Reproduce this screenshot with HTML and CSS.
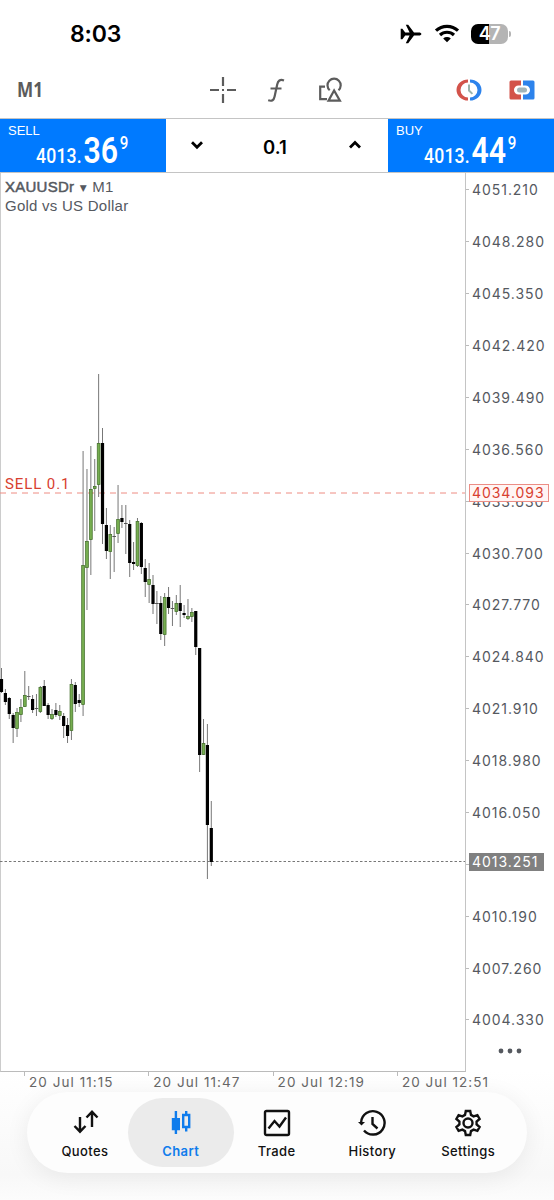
FILE: index.html
```
<!DOCTYPE html>
<html lang="en">
<head>
  <meta charset="UTF-8" />
  <meta name="viewport" content="width=device-width, initial-scale=1.0"/>
  <title>XAUUSDr M1</title>
  <link rel="stylesheet" href="styles.css">
</head>
<body>
  <header class="status">
    <span class="time">8:03</span>
    <svg class="plane" width="22" height="20" viewBox="0 0 22 20"><path d="M0.7 4.8h1.7l2.8 3.7h4.4L5.8.7h2.4l5.8 7.8h4.8c1.600 0 2.600.7 2.600 1.500s-1 1.500-2.600 1.500H14l-5.800 7.800H5.800l3.800-7.800H5.200l-2.800 3.700H.7V10z"/></svg>
    <svg class="wifi" width="26" height="19" viewBox="0 0 26 19">
      <path class="arc" d="M2 6.7a16 16 0 0 1 22 0M6 11a10.3 10.3 0 0 1 14 0"/>
      <path d="M13 18.3l-3.8-3.9a5.6 5.6 0 0 1 7.6 0z"/>
    </svg>
    <div class="battery">47</div>
    <i class="battery-tip"></i>
  </header>

  <div class="toolbar">
    <span class="period">M1</span>
    <svg class="tool cross" width="28" height="28" viewBox="0 0 28 28"><path d="M14 1v9M14 18v9M1 14h9M18 14h9M13 14h2"/></svg>
    <svg class="tool func" width="20" height="28" viewBox="0 0 20 28"><path d="M18 4.500c-4-1.500-6 .2-6.800 4L8.600 20.500c-.8 3.700-2.500 5-6.400 3.800M4.500 12.500h11"/></svg>
    <svg class="tool shapes" width="26" height="28" viewBox="0 0 26 28"><path d="M11.7 14.200a6.600 6.600 0 1 1 8.800 0M7 10.700H2.200v12.500H9M16.100 14.500l-5.600 10.200h11.400z"/></svg>
    <svg class="clock" width="28" height="24" viewBox="0 0 28 24">
      <path fill="#d3534a" d="M13 1.500v3a7.500 7.500 0 0 0 0 15v3a11.500 10.500 0 0 1 0-21z"/>
      <path fill="#2d83ec" d="M15 1.500v3a7.500 7.500 0 0 1 0 15v3a11.500 10.500 0 0 0 0-21z"/>
      <path fill="none" stroke="#9cb4ac" stroke-width="2" d="M14 6.5v6l3.4 3.4"/>
    </svg>
    <svg class="split" width="26" height="20" viewBox="0 0 26 20">
      <path fill="#d3534a" d="M2 .5h10v5H9.500a4.500 4.500 0 0 0 0 9H12v5H2a1.500 1.500 0 0 1-1.500-1.500V2A1.500 1.500 0 0 1 2 .5z"/>
      <path fill="#2d83ec" d="M24 .5H14v5h2.500a4.500 4.500 0 0 1 0 9H14v5h10a1.500 1.500 0 0 0 1.500-1.500V2A1.500 1.500 0 0 0 24 .5z"/>
      <rect x="8" y="7.500" width="10" height="5" rx="2.500" fill="#a3b5ba"/>
    </svg>
  </div>

  <div class="trade">
    <div class="deal">
      <div class="side">SELL</div>
      <div class="quote"><span>4013.</span><b>36</b><sup>9</sup></div>
    </div>
    <div class="volume">
      <svg width="14" height="10" viewBox="0 0 14 10"><path d="M2 2.200l5 5 5-5"/></svg>
      <span>0.1</span>
      <svg width="14" height="10" viewBox="0 0 14 10"><path d="M2 7.400l5-5 5 5"/></svg>
    </div>
    <div class="deal">
      <div class="side">BUY</div>
      <div class="quote"><span>4013.</span><b>44</b><sup>9</sup></div>
    </div>
  </div>

  <main class="chart">
    <div class="plot">
      <svg id="candles" width="466" height="898" viewBox="0 173 466 898">
        <line class="order-line" x1="0" y1="493" x2="465" y2="493"/>
        <line class="bid-line" x1="0" y1="861.500" x2="465" y2="861.500"/>
      </svg>
      <div class="symbol"><b>XAUUSDr</b> <i>▼</i> M1<br>Gold vs US Dollar</div>
      <div class="order-label">SELL 0.1</div>
    </div>
    <div class="prices">
      <div id="scale"></div>
      <div class="tag order">4034.093</div>
      <div class="tag bid">4013.251</div>
      <svg class="more" width="24" height="6" viewBox="0 0 24 6"><circle cx="3" cy="3" r="2.400"/><circle cx="12" cy="3" r="2.400"/><circle cx="21" cy="3" r="2.400"/></svg>
    </div>
  </main>

  <div class="dates">
    <span>20 Jul 11:15</span>
    <span>20 Jul 11:47</span>
    <span>20 Jul 12:19</span>
    <span>20 Jul 12:51</span>
  </div>

  <nav class="tabs">
    <a>
      <svg width="28" height="28" viewBox="0 0 28 28"><path d="M9 8v14.500M3.500 17l5.500 5.700 5.500-5.700M21 18V2.700M15.500 8.500L21 2.800l5.500 5.700"/></svg>
      Quotes
    </a>
    <a class="active">
      <svg width="28" height="28" viewBox="0 0 28 28"><path class="solid" d="M7.700 2h2.400v7h2.900v12.300h-2.900V25H7.700v-3.700H4.800V9h2.900z"/><path d="M19.200 2v4M19.200 18v4.500M16.200 6h6v12h-6z"/></svg>
      Chart
    </a>
    <a>
      <svg width="28" height="28" viewBox="0 0 28 28"><rect x="2" y="2" width="24" height="24" rx="1.500"/><path d="M5.500 19.500l6-7.500 5 5.500L23 8.500"/></svg>
      Trade
    </a>
    <a>
      <svg width="28" height="28" viewBox="0 0 28 28"><path d="M6 21.500A11.700 11.700 0 1 0 3.200 13M14.500 8v7l5 4.500"/><path class="solid" d="M0 13h7l-3.500 3.500z"/></svg>
      History
    </a>
    <a>
      <svg width="28" height="28" viewBox="0 0 28 28"><path d="M11.800 2h4.400l.8 3.900 2.600 1.500 3.800-1.300 2.200 3.800-3 2.600v3l3 2.600-2.200 3.800-3.800-1.300-2.600 1.500-.8 3.900h-4.400l-.8-3.900-2.600-1.500-3.800 1.300-2.200-3.800 3-2.600v-3l-3-2.600 2.200-3.800 3.800 1.300L11 5.900z"/><circle cx="14" cy="14" r="4.500"/></svg>
      Settings
    </a>
  </nav>

  <script>
    // [high, body top, body bottom, low, up]
    const candles = [
      [668, 679, 692, 693, 0], [689, 693, 702, 705, 0], [697, 698, 714, 719, 0],
      [713, 715, 728, 743, 0], [708, 712, 729, 737, 1], [699, 707, 715, 722, 1],
      [671, 695, 707, 707, 1], [686, 696, 697, 700, 0], [695, 699, 710, 713, 0],
      [694, 708, 709, 716, 1], [686, 687, 712, 713, 1], [680, 686, 706, 706, 0],
      [703, 705, 715, 719, 0], [709, 714, 719, 720, 1], [703, 710, 715, 717, 0],
      [705, 711, 716, 720, 1], [713, 716, 726, 738, 0], [718, 725, 736, 743, 0],
      [679, 684, 731, 740, 1], [682, 685, 704, 712, 0], [694, 700, 703, 707, 0],
      [451, 565, 705, 716, 1], [469, 541, 568, 610, 1], [446, 489, 540, 575, 1],
      [459, 486, 489, 531, 1], [374, 443, 485, 497, 1], [428, 443, 524, 544, 0],
      [508, 525, 551, 559, 0], [525, 534, 552, 579, 1], [527, 536, 537, 572, 1],
      [485, 519, 534, 543, 1], [505, 518, 522, 528, 0], [505, 523, 524, 554, 0],
      [520, 524, 563, 577, 0], [542, 562, 564, 570, 0], [518, 521, 566, 567, 1],
      [522, 523, 567, 574, 0], [559, 568, 582, 597, 0], [563, 579, 585, 603, 1],
      [575, 585, 604, 614, 0], [591, 603, 604, 624, 0], [596, 603, 634, 640, 0],
      [593, 597, 635, 646, 1], [587, 597, 608, 614, 0], [601, 608, 609, 626, 0],
      [595, 603, 612, 615, 1], [585, 603, 611, 627, 0], [605, 613, 615, 618, 0],
      [599, 616, 619, 620, 1], [608, 612, 617, 622, 1], [611, 611, 647, 655, 0],
      [648, 648, 755, 772, 0], [719, 743, 755, 755, 1], [724, 745, 825, 879, 0],
      [801, 828, 862, 866, 0]
    ];

    let svg = "";
    candles.forEach(([high, top, bottom, low, up], i) => {
      const x = 1.5 + i * 3.885;
      svg += `<line class="wick" x1="${x}" x2="${x}" y1="${high}" y2="${low}"/>`;
      if (bottom - top < 2) {
        svg += `<rect class="doji" x="${x - 1.8}" y="${top}" width="3.6" height="1"/>`;
      } else if (up) {
        svg += `<rect class="up" x="${x - 1.4}" y="${top + 0.4}" width="2.8" height="${bottom - top - 0.8}"/>`;
      } else {
        svg += `<rect x="${x - 1.6}" y="${top}" width="3.2" height="${bottom - top}"/>`;
      }
    });
    document.getElementById("candles").insertAdjacentHTML("beforeend", svg);

    // the bid tag takes the place of one scale value
    const bidRow = 13;
    let scale = "";
    for (let i = 0; i < 17; i++) {
      scale += `<div>${i === bidRow ? "" : (4051.21 - i * 2.93).toFixed(3)}</div>`;
    }
    document.getElementById("scale").innerHTML = scale;
  </script>
</body>
</html>
```
FILE: styles.css
```
* {
  box-sizing: border-box;
}
body {
  margin: 0;
  width: 554px;
  height: 1200px;
  overflow: hidden;
  background: linear-gradient(#fff 1070px, #f8f8f8 1175px, #fcfcfc 1200px);
  font-family: Inter, "Liberation Sans", sans-serif;
  color: #000;
}
svg {
  display: block;
  flex: none;
}
.status {
  display: flex;
  align-items: center;
  height: 67px;
  padding: 0 43px 0 70px;
}
.time {
  font-size: 23px;
  font-weight: 600;
  letter-spacing: -0.2px;
  margin-right: auto;
}
.wifi {
  margin: 0 11px 0 12px;
}
.wifi .arc {
  fill: none;
  stroke: #000;
  stroke-width: 3.2;
}
.battery {
  width: 37px;
  height: 20px;
  border-radius: 7px;
  background: linear-gradient(90deg, #000 48%, #b4b4b4 48%);
  color: #fff;
  font-size: 18px;
  font-weight: 600;
  letter-spacing: -0.5px;
  line-height: 20px;
  text-align: center;
}
.battery-tip {
  width: 2px;
  height: 6px;
  margin-left: 1px;
  border-radius: 0 2px 2px 0;
  background: #b4b4b4;
}
.toolbar {
  display: flex;
  align-items: center;
  height: 51px;
  padding: 0 19px 6px 17px;
}
.toolbar .period {
  width: 192px;
  margin-top: -3px;
  font: 700 22px "Noto Sans", sans-serif;
  color: #5c5c5c;
  transform: scaleX(0.78);
  transform-origin: left;
}
.tool {
  fill: none;
  stroke: #5c5c5c;
  stroke-width: 2.2;
}
.func {
  margin-left: 29px;
}
.shapes {
  margin-left: 32px;
}
.clock {
  margin-left: auto;
}
.split {
  margin-left: 26px;
}
.trade {
  display: flex;
  height: 55px;
  border-top: 1px solid #c4c4c4;
  border-bottom: 1px solid #c4c4c4;
}
.deal {
  width: 166px;
  height: 53px;
  padding: 4px 0 0 8px;
  background: #007aff;
  color: #fff;
}
.side {
  font: 13px/16px "Liberation Sans", sans-serif;
}
.quote {
  display: flex;
  align-items: baseline;
  margin: -6px 0 0 28px;
  font-family: Roboto, sans-serif;
  font-weight: 500;
  line-height: 36px;
  transform: scaleX(0.84);
  transform-origin: left;
}
.quote span {
  font-size: 21px;
  letter-spacing: 0.2px;
}
.quote b {
  margin-left: 2px;
  font-size: 36px;
  font-weight: 600;
}
.quote sup {
  align-self: flex-start;
  margin-left: 2px;
  font-size: 18px;
  line-height: 20px;
}
.volume {
  flex: 1;
  display: flex;
  align-items: center;
  justify-content: space-between;
  padding: 2px 26px 0 24px;
  font-size: 18.500px;
  font-weight: 600;
}
.volume span {
  margin-right: 2px;
}
.volume svg {
  fill: none;
  stroke: #000;
  stroke-width: 2.8;
  margin-top: -3px;
}
.chart {
  display: flex;
  height: 899px;
}
.plot {
  position: relative;
  width: 466px;
  border-left: 1px solid #ccc;
  border-right: 1px solid #c4c4c4;
  border-bottom: 1px solid #bbb;
}
#candles {
  margin-left: -1px;
}
.wick {
  stroke: #777;
  stroke-width: 1;
}
.up {
  fill: #76ad50;
  stroke: #3f6b27;
  stroke-width: 0.7;
}
.doji {
  fill: #555;
}
.order-line {
  stroke: #ee8c82;
  stroke-dasharray: 6 5;
}
.bid-line {
  stroke: #777;
  stroke-dasharray: 2.500 2;
}
.symbol {
  position: absolute;
  left: 4px;
  top: 4px;
  font: 15px/19px "Liberation Sans", sans-serif;
  letter-spacing: 0.25px;
  color: #55595f;
}
.symbol b {
  font-weight: 400;
  -webkit-text-stroke: 0.5px #55595f;
}
.symbol i {
  margin: 0 1px;
  font: 9px "DejaVu Sans", sans-serif;
  vertical-align: 1px;
}
.order-label {
  position: absolute;
  left: 4px;
  top: 303px;
  font: 15px/17px Roboto, sans-serif;
  letter-spacing: 0.9px;
  color: #d8402f;
}
.prices {
  position: relative;
  flex: 1;
  font-size: 14px;
  letter-spacing: 0.95px;
  color: #55595f;
}
#scale {
  margin-top: -9px;
}
#scale div {
  display: flex;
  align-items: center;
  height: 51.875px;
}
#scale div::before {
  content: "";
  width: 3px;
  height: 1px;
  margin-right: 3px;
  background: #bbb;
}
.tag {
  position: absolute;
  left: 3px;
  height: 18px;
  padding-left: 3px;
  line-height: 18px;
}
.tag.order {
  top: 311px;
  width: 80px;
  border: 1px solid #ec8d85;
  background: #fff5f4;
  color: #d8402f;
  line-height: 16px;
  padding-left: 2px;
}
.tag.bid {
  top: 680px;
  width: 75px;
  background: #808080;
  color: #fff;
}
.more {
  position: absolute;
  left: 32px;
  top: 875px;
  fill: #55595f;
}
.dates {
  display: flex;
  height: 20px;
  padding-left: 24px;
  font-size: 13.500px;
  line-height: 21px;
  letter-spacing: 1.050px;
  color: #666;
}
.dates span {
  flex: 0 0 124.300px;
  padding-left: 5px;
  white-space: nowrap;
  background: linear-gradient(#bbb, #bbb) left top / 1px 4px no-repeat;
}
.tabs {
  display: flex;
  align-items: center;
  width: 500px;
  height: 81px;
  margin-left: 27px;
  padding: 0 11px 0 10px;
  border-radius: 41px;
  background: #fdfdfd;
  box-shadow: 0 4px 24px rgba(0, 0, 0, 0.07);
}
.tabs a {
  flex: 1;
  display: flex;
  flex-direction: column;
  align-items: center;
  gap: 6px;
  height: 69px;
  padding-top: 11px;
  font-size: 13px;
  font-weight: 500;
  line-height: 17px;
  letter-spacing: 0.4px;
  color: #111;
}
.tabs a.active {
  flex: 0 0 106px;
  margin: 0 -5px;
  border-radius: 35px;
  background: #ebebeb;
  color: #0f7cec;
  font-weight: 600;
}
.tabs svg {
  fill: none;
  stroke: currentColor;
  stroke-width: 2.4;
}
.tabs .solid {
  fill: currentColor;
  stroke: none;
}
```
